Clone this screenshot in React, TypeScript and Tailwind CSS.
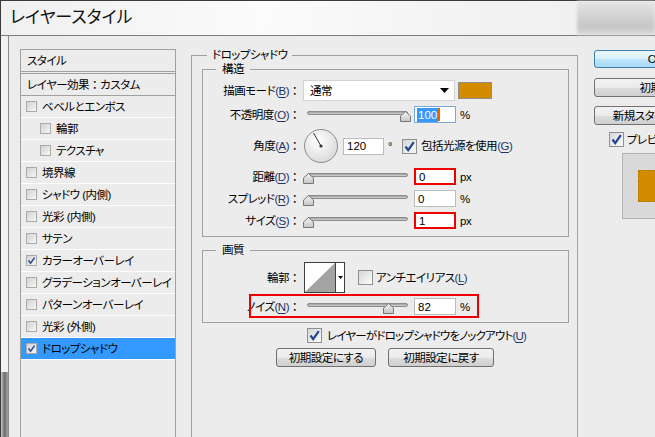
import type { ReactNode } from "react";

function Check({ on = false, small = false }: { on?: boolean; small?: boolean }) {
  if (small) {
    return (
      <span className="flex h-[11px] w-[11px] shrink-0 items-center justify-center border border-[#ababab] bg-[linear-gradient(135deg,#d2d2d2,#f6f6f6)]">
        {on && (
          <svg width="9" height="9" viewBox="0 0 9 9">
            <path d="M1.5 4.5 L3.6 7.2 L7.6 1.6" fill="none" stroke="#2d4a8e" strokeWidth="1.5" />
          </svg>
        )}
      </span>
    );
  }
  return (
    <span className="flex h-[15px] w-[15px] shrink-0 items-center justify-center border border-[#8e8f8f] bg-[linear-gradient(135deg,#d4d6da,#fbfbfb)]">
      {on && (
        <svg width="13" height="13" viewBox="0 0 13 13">
          <path d="M2.5 6.5 L5.2 10.2 L10.8 2.2" fill="none" stroke="#24448c" strokeWidth="2.2" />
        </svg>
      )}
    </span>
  );
}

function Key({ k }: { k: string }) {
  return (
    <span className="text-[#1f3566]">
      (<span className="underline underline-offset-2">{k}</span>)
    </span>
  );
}

function Colon() {
  return <span className="[font-feature-settings:normal]">：</span>;
}

function Label({ text, k }: { text: string; k?: string }) {
  return (
    <span className="w-[97px] shrink-0 whitespace-nowrap text-right">
      {text}
      {k && <Key k={k} />}
      <Colon />
    </span>
  );
}

function Slider({ value }: { value: number }) {
  return (
    <div className="relative ml-[3px] h-[17px] w-[108px] shrink-0">
      <div className="absolute left-[4px] right-[3px] top-[5px] h-[4px] rounded-full border border-[#8c8c8c] bg-[linear-gradient(#9c9c9c,#d6d6d6)]" />
      <svg
        className="absolute top-[5px]"
        style={{ left: Math.round(value * 97) }}
        width="11"
        height="11"
        viewBox="0 0 11 11"
      >
        <defs>
          <linearGradient id="th" x1="0" y1="0" x2="0" y2="1">
            <stop offset="0" stopColor="#f6f6f6" />
            <stop offset="1" stopColor="#c4c4c4" />
          </linearGradient>
        </defs>
        <path d="M5.5 0.5 L10.5 5 L10.5 10.5 L0.5 10.5 L0.5 5 Z" fill="url(#th)" stroke="#777" />
      </svg>
    </div>
  );
}

function Field({ children, red = false, w = "w-[42px]" }: { children: ReactNode; red?: boolean; w?: string }) {
  return (
    <div
      className={`${w} flex h-[17px] shrink-0 items-center bg-white pl-[3px] tracking-normal ${
        red ? "border-2 border-[#ee0000]" : "border border-[#bcbcbc]"
      }`}
    >
      {children}
    </div>
  );
}

function Btn({ children, w }: { children: ReactNode; w: string }) {
  return (
    <div
      className={`${w} flex h-[19px] shrink-0 items-center justify-center whitespace-nowrap rounded-[3px] border border-[#707070] bg-[linear-gradient(#f2f2f2_0%,#ebebeb_50%,#dddddd_51%,#cfcfcf_100%)]`}
    >
      {children}
    </div>
  );
}

const effects: { name: ReactNode; sub?: boolean; on?: boolean; sel?: boolean }[] = [
  { name: "ベベルとエンボス" },
  { name: "輪郭", sub: true },
  { name: "テクスチャ", sub: true },
  { name: "境界線" },
  { name: <>シャドウ (内側)</> },
  { name: <>光彩 (内側)</> },
  { name: "サテン" },
  { name: "カラーオーバーレイ", on: true },
  { name: "グラデーションオーバーレイ" },
  { name: "パターンオーバーレイ" },
  { name: <>光彩 (外側)</> },
  { name: "ドロップシャドウ", on: true, sel: true },
];

export default function App() {
  return (
    <div className="flex h-[437px] w-[655px] flex-col overflow-hidden bg-[#ececec] font-['Liberation_Sans','Noto_Sans_CJK_JP',sans-serif] text-[11.5px] leading-[14px] tracking-[-0.5px] text-black [font-feature-settings:'palt']">
      {/* title bar */}
      <div className="flex h-[36px] shrink-0 items-center border-b border-t border-l border-[#7d7d7d] border-t-[#3a3a3a] border-l-[#3a3a3a] bg-[linear-gradient(100deg,#f0f0f0_0%,#fbfbfb_40%,#f3f3f3_70%,#efefef_100%)]">
        <span className="pl-[9px] text-[17px] leading-[20px] tracking-normal text-[#111]">レイヤースタイル</span>
        <div className="flex-1" />
        <div className="h-full w-[78px] bg-[linear-gradient(180deg,#e6e6e6,#d2d2d2_45%,#c6c6c6_75%,#dadada)] blur-[1.5px]" />
      </div>

      <div className="flex flex-1">
        {/* window frame */}
        <div className="flex w-[9px] shrink-0 flex-col border-l border-r border-l-[#3a3a3a] border-r-[#8c8c8c] bg-[#f2f2f2]">
          <div className="flex-1" />
          <div className="h-[77px] bg-[linear-gradient(90deg,#c8c8c8,#6e6e6e,#a4a4a4)]" />
        </div>

        {/* style list */}
        <div className="ml-[11px] mt-[13px] h-[400px] w-[156px] shrink-0 border border-[#a0a0a0]">
          <div className="flex h-[22px] items-center border-b border-[#a0a0a0] pl-[6px]">スタイル</div>
          <div className="mt-[1px] flex h-[23px] items-center border-y border-[#a0a0a0] pl-[6px]">
            レイヤー効果
            <Colon />
            カスタム
          </div>
          {effects.map((e, i) => (
            <div
              key={i}
              className={`flex h-[22px] items-center gap-[5px] border-b border-white ${e.sub ? "pl-[19px]" : "pl-[5px]"} ${
                e.sel ? "bg-[#3399ff]" : ""
              }`}
            >
              <Check small on={e.on} />
              <span className="whitespace-nowrap">{e.name}</span>
            </div>
          ))}
        </div>

        {/* drop shadow panel */}
        <fieldset className="ml-[15px] mt-[12px] h-[400px] w-[387px] shrink-0 border border-[#a0a0a0] pl-[10px] pr-[8px]">
          <legend className="ml-[5px] px-[5px] leading-[14px]">ドロップシャドウ</legend>

          <fieldset className="border border-[#a0a0a0] pb-[7px]">
            <legend className="ml-[13px] px-[6px] leading-[14px]">構造</legend>

            <div className="mt-[4px] flex h-[21px] items-center">
              <Label text="描画モード" k="B" />
              <div className="ml-[3px] flex h-[21px] w-[152px] shrink-0 items-center justify-between border border-[#d2d2d2] bg-white pl-[6px] pr-[5px]">
                <span>通常</span>
                <svg width="9" height="5" viewBox="0 0 9 5">
                  <path d="M0 0 H9 L4.5 5 Z" fill="#000" />
                </svg>
              </div>
              <div className="ml-[3px] h-[17px] w-[34px] shrink-0 border border-[#8d8d8d] bg-[#d38b00]" />
            </div>

            <div className="mt-[5px] flex h-[17px] items-center">
              <Label text="不透明度" k="O" />
              <Slider value={1} />
              <div className="ml-[3px] flex h-[17px] w-[42px] shrink-0 items-center border border-[#7aa7d8] bg-white pl-[2px] tracking-normal">
                <span className="bg-[#3399ff] px-[1px] text-white">100</span>
                <span className="h-[13px] w-[2px] bg-[#e06a00]" />
              </div>
              <span className="ml-[4px]">%</span>
            </div>

            <div className="mt-[6px] flex h-[34px] items-center">
              <Label text="角度" k="A" />
              <svg className="ml-[4px] shrink-0" width="34" height="34" viewBox="0 0 34 34">
                <defs>
                  <radialGradient id="dl" cx="0.4" cy="0.35" r="0.7">
                    <stop offset="0" stopColor="#ffffff" />
                    <stop offset="1" stopColor="#d9d9d9" />
                  </radialGradient>
                </defs>
                <circle cx="17" cy="17" r="16.5" fill="url(#dl)" stroke="#8c8c8c" />
                <line x1="17" y1="17" x2="9.5" y2="4" stroke="#333" strokeWidth="1" />
                <circle cx="17" cy="17" r="1.6" fill="#333" />
              </svg>
              <div className="ml-[5px]">
                <Field w="w-[41px]">120</Field>
              </div>
              <span className="w-[18px] shrink-0 pl-[4px]">°</span>
              <Check on />
              <span className="ml-[4px] whitespace-nowrap">
                包括光源を使用
                <Key k="G" />
              </span>
            </div>

            <div className="mt-[5px] flex h-[17px] items-center">
              <Label text="距離" k="D" />
              <Slider value={0} />
              <div className="ml-[3px]">
                <Field red>0</Field>
              </div>
              <span className="ml-[4px]">px</span>
            </div>

            <div className="mt-[5px] flex h-[17px] items-center">
              <Label text="スプレッド" k="R" />
              <Slider value={0} />
              <div className="ml-[3px]">
                <Field>0</Field>
              </div>
              <span className="ml-[4px]">%</span>
            </div>

            <div className="mt-[5px] flex h-[17px] items-center">
              <Label text="サイズ" k="S" />
              <Slider value={0} />
              <div className="ml-[3px]">
                <Field red>1</Field>
              </div>
              <span className="ml-[4px]">px</span>
            </div>
          </fieldset>

          <fieldset className="mt-[6px] border border-[#a0a0a0] pb-[7px]">
            <legend className="ml-[13px] px-[6px] leading-[14px]">画質</legend>

            <div className="mt-[5px] flex h-[31px] items-center">
              <Label text="輪郭" />
              <div className="ml-[4px] flex h-[31px] w-[41px] shrink-0 border border-[#404040] bg-white">
                <svg width="30" height="29" viewBox="0 0 30 29">
                  <path d="M0 29 L30 0 L30 29 Z" fill="#a3a3a3" />
                </svg>
                <div className="flex flex-1 items-center justify-center border-l border-[#404040]">
                  <svg width="5" height="3" viewBox="0 0 5 3">
                    <path d="M0 0 H5 L2.5 3 Z" fill="#000" />
                  </svg>
                </div>
              </div>
              <div className="ml-[13px]">
                <Check />
              </div>
              <span className="ml-[3px] whitespace-nowrap">
                アンチエイリアス
                <Key k="L" />
              </span>
            </div>

            <div className="relative mt-[5px] flex h-[17px] items-center">
              <Label text="ノイズ" k="N" />
              <Slider value={0.82} />
              <div className="ml-[3px]">
                <Field>82</Field>
              </div>
              <span className="ml-[4px]">%</span>
              <div className="absolute -top-[4px] left-[46px] h-[24px] w-[230px] border-2 border-[#ee0000]" />
            </div>
          </fieldset>

          <div className="mt-[5px] flex h-[15px] items-center pl-[105px]">
            <Check on />
            <span className="ml-[5px] whitespace-nowrap tracking-[-0.8px]">
              レイヤーがドロップシャドウをノックアウト
              <Key k="U" />
            </span>
          </div>

          <div className="mt-[5px] flex gap-[12px] pl-[74px]">
            <Btn w="w-[100px]">初期設定にする</Btn>
            <Btn w="w-[106px]">初期設定に戻す</Btn>
          </div>
        </fieldset>

        {/* right column */}
        <div className="ml-[16px] mt-[14px] flex w-[124px] shrink-0 flex-col">
          <div className="flex h-[18px] items-center justify-center rounded-[3px] border border-[#3c7fb1] bg-[linear-gradient(#eaf6fd_0%,#d9f0fc_50%,#bee6fd_51%,#a7d9f5_100%)] tracking-normal">
            OK
          </div>
          <div className="mt-[10px]">
            <Btn w="w-[124px]">初期化</Btn>
          </div>
          <div className="mt-[9px]">
            <Btn w="w-[124px]">新規スタイル(W)...</Btn>
          </div>
          <div className="mt-[7px] flex items-center pl-[15px]">
            <Check on />
            <span className="ml-[3px] whitespace-nowrap">プレビュー(V)</span>
          </div>
          <div className="ml-[28px] mt-[6px] h-[66px] w-[96px] border border-[#b4b4b4] bg-[#d9d9d9] pl-[15px] pt-[16px]">
            <div className="h-[32px] w-[32px] border border-dashed border-[#b87800] bg-[#d38b00]" />
          </div>
        </div>
      </div>
    </div>
  );
}
